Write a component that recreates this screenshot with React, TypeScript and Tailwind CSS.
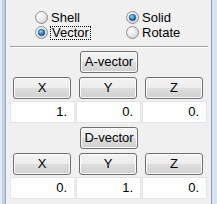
import React from "react";

const font = { fontFamily: '"Liberation Sans", Arial, sans-serif' };

function Radio({ checked }: { checked?: boolean }) {
    return (
        <svg width="13" height="13" viewBox="0 0 13 13" className="shrink-0">
            <defs>
                <radialGradient id="rbg" cx="0.35" cy="0.3" r="0.8">
                    <stop offset="0" stopColor="#ffffff" />
                    <stop offset="0.6" stopColor="#e6e6e6" />
                    <stop offset="1" stopColor="#c8c8c8" />
                </radialGradient>
                <radialGradient id="rdot" cx="0.4" cy="0.35" r="0.7">
                    <stop offset="0" stopColor="#a8e0ff" />
                    <stop offset="0.5" stopColor="#2b8ad6" />
                    <stop offset="1" stopColor="#0d4f8e" />
                </radialGradient>
            </defs>
            <circle cx="6.5" cy="6.5" r="6" fill="url(#rbg)" stroke="#8f8f8f" strokeWidth="1" />
            {checked && <circle cx="6.5" cy="6.5" r="3.3" fill="url(#rdot)" stroke="#1b4f80" strokeWidth="0.6" />}
        </svg>
    );
}

function Btn({ label, className = "" }: { label: string; className?: string }) {
    return (
        <div
            className={`h-[22px] flex items-center justify-center rounded-[3px] border border-[#707070] bg-[linear-gradient(to_bottom,#f4f4f4_0%,#ececec_50%,#dedede_51%,#d0d0d0_100%)] shadow-[inset_0_0_0_1px_#fbfbfb] text-[13px] text-black ${className}`}
        >
            {label}
        </div>
    );
}

function Field({ value }: { value: string }) {
    return (
        <div className="h-[22px] flex items-center justify-end pr-[7px] bg-white border border-[#e2e4e7] text-[13px] text-black">
            {value}
        </div>
    );
}

function VectorBlock({ title, values }: { title: string; values: string[] }) {
    return (
        <>
            <div className="flex justify-center">
                <Btn label={title} className="w-[58px]" />
            </div>
            <div className="mt-[4px] ml-[6px] grid grid-cols-[58px_58px_58px] gap-x-[8px]">
                <Btn label="X" />
                <Btn label="Y" />
                <Btn label="Z" />
            </div>
            <div className="mt-[2px] ml-[3px] grid grid-cols-[65px_65px_65px] gap-x-px">
                {values.map((v, i) => (
                    <Field key={i} value={v} />
                ))}
            </div>
        </>
    );
}

export default function App() {
    return (
        <div className="w-[217px] h-[204px] flex overflow-hidden" style={font}>
            <div className="w-[7px] h-full bg-[linear-gradient(to_right,#e4edf7_0px,#e4edf7_2px,#bcd2ea_2px,#bcd2ea_5px,#8ea6c3_5px,#8ea6c3_6px,#ffffff_6px)]" />
            <div className="w-[204px] h-full bg-[#f0f0f0] flex flex-col">
                <div className="pt-[10px] pl-[28px] grid grid-cols-[91px_auto] auto-rows-[15px]">
                    <div className="flex items-center gap-[3px] text-[13px] leading-none">
                        <Radio />
                        <span>Shell</span>
                    </div>
                    <div className="flex items-center gap-[3px] text-[13px] leading-none">
                        <Radio checked />
                        <span>Solid</span>
                    </div>
                    <div className="flex items-center gap-[2px] text-[13px] leading-none">
                        <Radio checked />
                        <span className="border border-dotted border-black px-px h-[14px] flex items-center">Vector</span>
                    </div>
                    <div className="flex items-center gap-[3px] text-[13px] leading-none">
                        <Radio />
                        <span>Rotate</span>
                    </div>
                </div>
                <div className="mt-[6px] mx-[3px] h-px bg-[#a0a0a0]" />
                <div className="mx-[3px] h-px bg-white" />
                <div className="mt-[3px]">
                    <VectorBlock title="A-vector" values={["1.", "0.", "0."]} />
                </div>
                <div className="mt-[4px]">
                    <VectorBlock title="D-vector" values={["0.", "1.", "0."]} />
                </div>
            </div>
            <div className="w-[6px] h-full bg-[linear-gradient(to_right,#8a9cb3_0px,#8a9cb3_1px,#d9e5f2_1px)]" />
        </div>
    );
}
